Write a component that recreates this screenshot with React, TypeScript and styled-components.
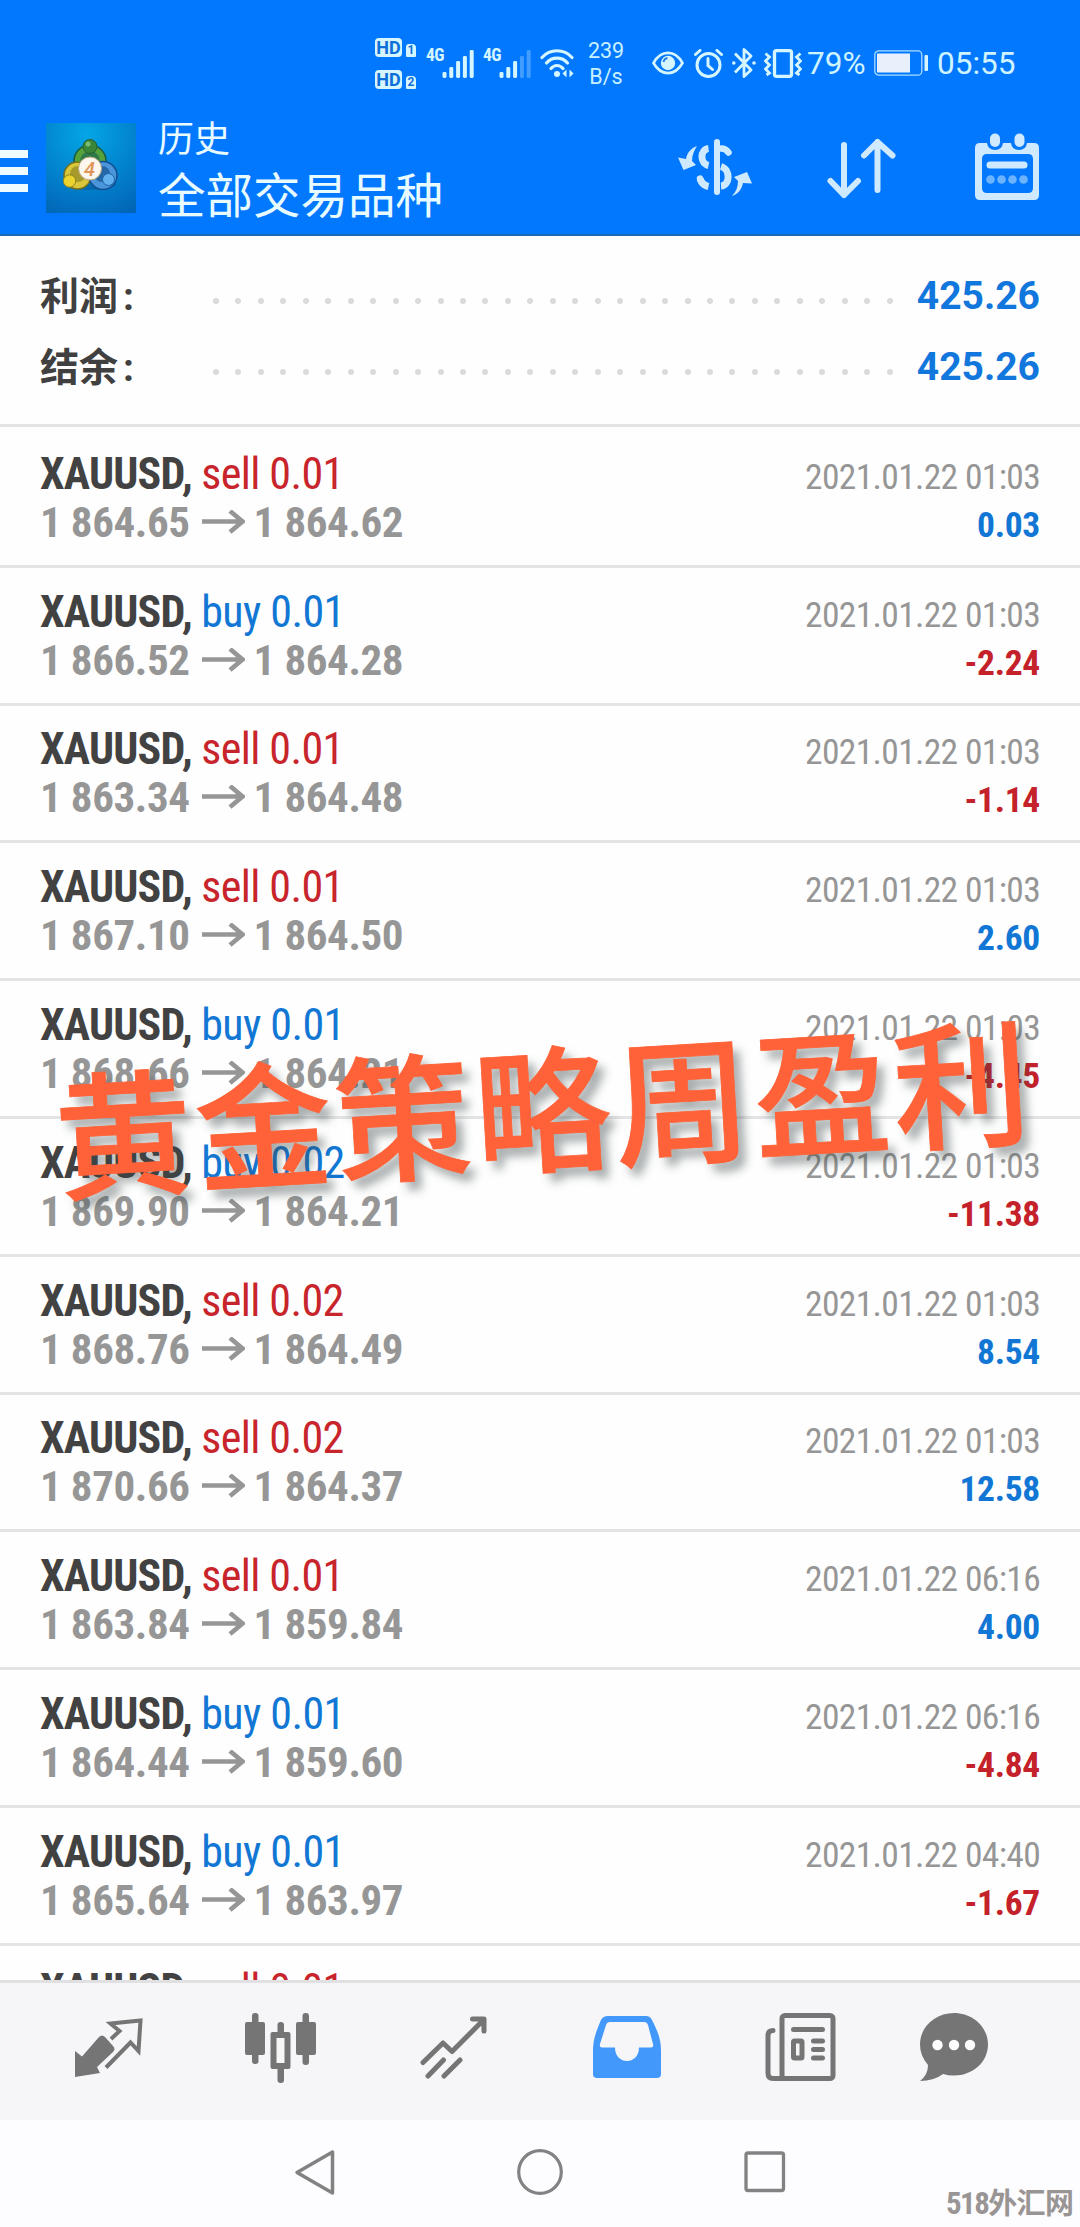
import React from "react";
import styled, { createGlobalStyle } from "styled-components";

const Global = createGlobalStyle`
  * { box-sizing: border-box; }
  html, body { margin: 0; background: #fdfdff; }
  svg { display: block; flex: none; }
`;

const UI = `"Roboto", "Noto Sans CJK SC", sans-serif`;
const COND = `"Roboto Condensed", "Roboto", "Noto Sans CJK SC", sans-serif`;

const Screen = styled.div`
  position: relative;
  width: 1080px;
  height: 2227px;
  display: flex;
  flex-direction: column;
  overflow: hidden;
  background: #fefefe;
  font-family: ${UI};
`;

const Header = styled.header`
  height: 236px;
  flex: none;
  display: flex;
  flex-direction: column;
  background: #0278ff;
  border-bottom: 2px solid #1a68b8;
  color: #e8fbff;
`;

const StatusBar = styled.div`
  height: 118px;
  padding: 8px 0 0 375px;
  display: flex;
  align-items: center;
`;

const Slot = styled.div<{ $gap?: number; $drop?: number }>`
  flex: none;
  margin-left: ${(p) => p.$gap ?? 0}px;
  padding-top: ${(p) => p.$drop ?? 0}px;
`;

const HdStack = styled.div`
  display: flex;
  flex-direction: column;
  gap: 13px;
`;
const HdLine = styled.div`
  display: flex;
  align-items: flex-end;
  gap: 4px;
`;
const HdTag = styled.span`
  width: 27px;
  height: 19px;
  border-radius: 4px;
  background: #d5f6ff;
  color: #0e6fd8;
  font: 700 18px/19px ${UI};
  text-align: center;
`;
const HdNum = styled.span`
  width: 10px;
  height: 13px;
  border-radius: 3px 4px 1px 1px;
  background: #d5f6ff;
  color: #0e6fd8;
  font: 700 12px/13px ${UI};
  text-align: center;
`;
const NetLabel = styled.span`
  display: block;
  width: 17px;
  margin-top: -16px;
  font: 700 17.5px/17px ${COND};
  font-stretch: 75%;
  letter-spacing: -0.6px;
  color: #d5f6ff;
`;
const Speed = styled.div`
  width: 40px;
  font-size: 21.5px;
  line-height: 26px;
  text-align: center;
  color: #c8f1ff;
`;
const StatusText = styled.span<{ $w: number }>`
  display: block;
  width: ${(p) => p.$w}px;
  font-size: 31.5px;
  line-height: 36px;
  white-space: nowrap;
  color: #d0f4ff;
`;

const AppBar = styled.div`
  flex: 1;
  display: flex;
  align-items: flex-start;
`;
const MenuIcon = styled.div`
  width: 28px;
  margin-top: 32px;
  display: flex;
  flex-direction: column;
  gap: 9.5px;
  i { height: 7.5px; background: #effcff; }
`;
const Logo = styled.div`
  width: 90px;
  height: 90px;
  margin: 5px 0 0 18px;
  background: radial-gradient(circle at 45% 12%, #04a6e6 0, #0287d0 45%, #0262b4 100%);
`;
const Titles = styled.div`
  margin-left: 22px;
  padding-top: 2px;
  width: 500px;
`;
const Small = styled.div`
  font-size: 36px;
  line-height: 40px;
`;
const Big = styled.div`
  margin-top: 11px;
  font-size: 47.5px;
  line-height: 52px;
`;
const Actions = styled.div`
  display: flex;
  margin-left: 19px;
  padding-top: 14px;
`;

const Summary = styled.section`
  height: 191px;
  flex: none;
  padding: 26px 40px 0 40px;
  border-bottom: 3px solid #e4e4e6;
`;
const SummaryRow = styled.div`
  height: 70.4px;
  display: flex;
  align-items: center;
`;
const SumLabel = styled.span`
  width: 173px;
  font-size: 39px;
  line-height: 60px;
  font-weight: 700;
  color: #404040;
`;
const Colon = styled.span`
  margin-left: 5px;
`;
const Dots = styled.span`
  width: 680px;
  padding-top: 8px;
  display: flex;
  justify-content: space-between;
  i { width: 6px; height: 6px; border-radius: 50%; background: #dcdad9; }
`;
const SumValue = styled.span`
  flex: 1;
  text-align: right;
  padding-bottom: 2px;
  font-size: 39px;
  font-weight: 700;
  color: #1277dc;
`;

const List = styled.section`
  height: 1553px;
  flex: none;
  overflow: hidden;
`;
const Deal = styled.article<{ $first?: boolean }>`
  height: ${(p) => (p.$first ? 140.8 : 137.8)}px;
  padding: ${(p) => (p.$first ? 22.5 : 19.9)}px 40px 0;
  border-bottom: 3px solid #e4e4e6;
`;
const Line = styled.div`
  display: flex;
  align-items: baseline;
  justify-content: space-between;
  height: 48px;
  line-height: 48px;
  white-space: nowrap;
  font-family: ${COND};
  font-stretch: 75%;
`;
const Head = styled.span`
  font-size: 44px;
  font-weight: 700;
  letter-spacing: -0.8px;
  color: #424242;
`;
const Side = styled.span<{ $sell: boolean }>`
  font-weight: 400;
  letter-spacing: -0.6px;
  color: ${(p) => (p.$sell ? "#c8242b" : "#1277d4")};
`;
const Prices = styled.span`
  display: flex;
  align-items: baseline;
  font-size: 43px;
  font-weight: 700;
  letter-spacing: -0.4px;
  color: #969696;
  svg { margin: 0 9px 0 12px; }
`;
const DateText = styled.span`
  font-size: 35.5px;
  letter-spacing: -0.66px;
  color: #969696;
`;
const Result = styled.span<{ $loss: boolean }>`
  font-size: 35.5px;
  font-weight: 700;
  letter-spacing: -0.3px;
  color: ${(p) => (p.$loss ? "#c4212a" : "#1277d4")};
`;

const TabBar = styled.nav`
  height: 140px;
  flex: none;
  display: flex;
  align-items: flex-start;
  padding: 30px 0 0 75px;
  border-top: 3px solid #e0e0e2;
  background: #f6f6f8;
`;
const SysBar = styled.footer`
  flex: 1;
  display: flex;
  align-items: flex-start;
  padding: 28px 0 0 294px;
  background: #fdfdff;
`;

const Banner = styled.div`
  position: absolute;
  left: 54px;
  top: 1002px;
  width: 979px;
  line-height: 200px;
  font-family: "Noto Sans CJK SC", sans-serif;
  font-weight: 500;
  font-size: 137px;
  letter-spacing: 2.8px;
  white-space: nowrap;
  color: #ff6238;
  -webkit-text-stroke: 0.8px #ff6238;
  transform: rotate(-3.35deg);
  text-shadow: 7px 9px 10px rgba(60, 70, 70, 0.45);
`;
const Watermark = styled.div`
  position: absolute;
  left: 946px;
  top: 2184px;
  line-height: 40px;
  font-family: ${COND};
  font-stretch: 75%;
  font-weight: 700;
  font-size: 31px;
  letter-spacing: -1.6px;
  white-space: nowrap;
  color: #9a9595;
`;
const WatermarkName = styled.span`
  font-size: 29px;
  letter-spacing: -0.6px;
`;

const deals: [string, string, string, string, string, string][] = [
  ["sell", "0.01", "1 864.65", "1 864.62", "2021.01.22 01:03", "0.03"],
  ["buy", "0.01", "1 866.52", "1 864.28", "2021.01.22 01:03", "-2.24"],
  ["sell", "0.01", "1 863.34", "1 864.48", "2021.01.22 01:03", "-1.14"],
  ["sell", "0.01", "1 867.10", "1 864.50", "2021.01.22 01:03", "2.60"],
  ["buy", "0.01", "1 868.66", "1 864.21", "2021.01.22 01:03", "-4.45"],
  ["buy", "0.02", "1 869.90", "1 864.21", "2021.01.22 01:03", "-11.38"],
  ["sell", "0.02", "1 868.76", "1 864.49", "2021.01.22 01:03", "8.54"],
  ["sell", "0.02", "1 870.66", "1 864.37", "2021.01.22 01:03", "12.58"],
  ["sell", "0.01", "1 863.84", "1 859.84", "2021.01.22 06:16", "4.00"],
  ["buy", "0.01", "1 864.44", "1 859.60", "2021.01.22 06:16", "-4.84"],
  ["buy", "0.01", "1 865.64", "1 863.97", "2021.01.22 04:40", "-1.67"],
  ["sell", "0.01", "1 865.64", "1 863.97", "2021.01.22 06:16", "1.67"],
];

const ICE = "#d5f6ff";

function Signal({ strong }: { strong: number }) {
  return (
    <svg width="32" height="29" viewBox="0 0 32 29">
      {[6, 11, 17, 22, 28].map((h, i) => (
        <rect key={h} x={0.5 + i * 6.8} y={29 - h} width="4" height={h} rx="1.4" fill={ICE} opacity={i < strong ? 1 : 0.3} />
      ))}
    </svg>
  );
}

function Status() {
  return (
    <StatusBar>
      <HdStack>
        <HdLine><HdTag>HD</HdTag><HdNum>1</HdNum></HdLine>
        <HdLine><HdTag>HD</HdTag><HdNum>2</HdNum></HdLine>
      </HdStack>
      <Slot $gap={10}><NetLabel>4G</NetLabel></Slot>
      <Slot $gap={-1}><Signal strong={5} /></Slot>
      <Slot $gap={9}><NetLabel>4G</NetLabel></Slot>
      <Slot $gap={-1}><Signal strong={3} /></Slot>
      <Slot $gap={9}>
        <svg width="34" height="30" viewBox="0 0 34 30" fill="none" stroke={ICE} strokeWidth="3.2" strokeLinecap="round">
          <path d="M2 9.5C10 .5 24 .5 32 9.5M6.500 15C12 8.500 22 8.500 27.500 15M11 20.500c3.500-4 8.500-4 12 0" />
          <circle cx="17" cy="26" r="3" fill={ICE} stroke="none" />
          <path d="M26.500 21.500v8l-4-4zM29.500 21.500v8l4-4z" fill={ICE} stroke="none" />
        </svg>
      </Slot>
      <Slot $gap={12} $drop={2}><Speed>239<br />B/s</Speed></Slot>
      <Slot $gap={26}>
        <svg width="32" height="24" viewBox="0 0 32 24">
          <path d="M1.500 12C9-1.500 23-1.500 30.500 12C23 25.500 9 25.500 1.500 12z" fill="none" stroke={ICE} strokeWidth="2.600" />
          <circle cx="16" cy="12" r="7.200" fill={ICE} />
          <path d="M11.500 11a5 5 0 0 1 4-4" stroke="#2a84dd" strokeWidth="1.800" fill="none" />
        </svg>
      </Slot>
      <Slot $gap={10}>
        <svg width="29" height="29" viewBox="0 0 29 29" fill="none" stroke={ICE} strokeWidth="3" strokeLinecap="round">
          <circle cx="14.500" cy="16" r="11.500" />
          <path d="M14 9.500v7l4.500 4M1.500 5.500l4.500-4M27.500 5.500l-4.500-4" />
        </svg>
      </Slot>
      <Slot $gap={9}>
        <svg width="24" height="30" viewBox="0 0 24 30" fill="none" stroke={ICE} strokeWidth="2.800" strokeLinejoin="round">
          <path d="M3 5.500l16 16.500-7 6.500v-27l7 6.500L3 24.500" />
          <circle cx="1.800" cy="15" r="1.800" fill={ICE} stroke="none" />
          <circle cx="22" cy="15" r="1.800" fill={ICE} stroke="none" />
        </svg>
      </Slot>
      <Slot $gap={8}>
        <svg width="38" height="29" viewBox="0 0 38 29" fill="none" stroke={ICE} strokeWidth="3.300">
          <rect x="10.500" y="1.700" width="17" height="25.600" rx="2" />
          <path d="M1.500 4.500l4 3.500-4 4 4 4-4 4 4 4-3 2M36.500 4.500l-4 3.500 4 4-4 4 4 4-4 4 3 2" strokeWidth="2.800" />
        </svg>
      </Slot>
      <Slot $gap={5} $drop={1}><StatusText $w={60}>79%</StatusText></Slot>
      <Slot $gap={7}>
        <svg width="54" height="26" viewBox="0 0 54 26">
          <rect x=".8" y=".8" width="47" height="24.400" rx="4" fill="none" stroke={ICE} strokeWidth="1.300" opacity=".8" />
          <rect x="3" y="3.500" width="33" height="19" fill="#e8f1fb" />
          <rect x="50.500" y="5" width="3.500" height="16" rx="1" fill={ICE} />
        </svg>
      </Slot>
      <Slot $gap={9} $drop={1}><StatusText $w={80}>05:55</StatusText></Slot>
    </StatusBar>
  );
}

function LogoArt() {
  return (
    <svg width="90" height="90" viewBox="0 0 90 90">
      <ellipse cx="44" cy="61" rx="26" ry="6" fill="#064a86" opacity=".4" />
      <circle cx="44" cy="38" r="16" fill="#56a33c" stroke="#1c5a3c" strokeWidth="1.500" />
      <circle cx="44" cy="38" r="10" fill="#2f7a4a" />
      <circle cx="31.500" cy="52.500" r="13.500" fill="#d9c63a" stroke="#75701f" strokeWidth="1.500" />
      <circle cx="32" cy="51" r="8" fill="#a79a2c" />
      <circle cx="57" cy="52.500" r="14" fill="#4a95dc" stroke="#134f91" strokeWidth="1.500" />
      <circle cx="56" cy="51" r="8" fill="#2667a8" />
      <circle cx="44" cy="23.500" r="7" fill="#3b8538" stroke="#236034" strokeWidth="1" />
      <circle cx="42" cy="21" r="2.500" fill="#7cbc70" />
      <circle cx="23.500" cy="58" r="6.200" fill="#ecd32f" stroke="#8f8520" strokeWidth="1" />
      <circle cx="62.500" cy="56.500" r="6" fill="#62b0ee" stroke="#1b60a6" strokeWidth="1" />
      <circle cx="44" cy="45.500" r="11.500" fill="#fdf6ee" stroke="#b5a778" strokeWidth="1" />
      <text x="43.500" y="52.500" textAnchor="middle" fontFamily="Roboto" fontStyle="italic" fontWeight="500" fontSize="20" fill="#e09458">4</text>
    </svg>
  );
}

const BAR = "#cfeaff";
const GREY = "#757575";

export default function App() {
  return (
    <Screen>
      <Global />
      <Header>
        <Status />
        <AppBar>
          <MenuIcon><i /><i /><i /></MenuIcon>
          <Logo><LogoArt /></Logo>
          <Titles>
            <Small>历史</Small>
            <Big>全部交易品种</Big>
          </Titles>
          <Actions>
            <Slot>
              <svg width="76" height="70" viewBox="0 0 76 70" fill="none" stroke={BAR} strokeWidth="6" strokeLinecap="round">
                <path d="M40 10v50" />
                <path d="M31.500 16.500c-8.500 1-9 15 0 17M44 34.500c10 3 9 19 0 19.500M23 47c1.500 4 4 6.500 8.500 7.500" strokeWidth="7" strokeLinecap="butt" />
                <path d="M44 16.500c4 0 6 1.500 7.500 4M23 46.500c1 3 2 4.500 4 6" strokeWidth="6.500" />
                <path d="M20 14c-6 2-10 7-11 13L1 25.500 6.500 38l12.500-5-4-4c0-6 2-10 5-15z M55 64c7-2 10-8 11-13l9 .5-5-11.500-13 5 4 4c0 6-2 11-6 15z" fill={BAR} stroke="none" />
              </svg>
            </Slot>
            <Slot $gap={74}>
              <svg width="70" height="70" viewBox="0 0 70 70" fill="none" stroke={BAR} strokeWidth="6" strokeLinecap="round" strokeLinejoin="round">
                <path d="M17 13v50M3.500 49l13.500 14 14-14M50.500 58V10M37 23.500L50.500 10l15 13.500" />
              </svg>
            </Slot>
            <Slot $gap={78}>
              <svg width="66" height="70" viewBox="0 0 66 70">
                <path fillRule="evenodd" fill={BAR} d="M5 11h7q1 7 8 7t8-7h8q1 7 8 7t8-7h7q5 0 5 5v47q0 5-5 5H5q-5 0-5-5V16q0-5 5-5zM12 22q-5 0-5 5v29q0 5 5 5h41q5 0 5-5V27q0-5-5-5z" />
                <rect x="15" y="1.500" width="10" height="13.500" rx="5" fill={BAR} />
                <rect x="39.500" y="1.500" width="10" height="13.500" rx="5" fill={BAR} />
                <path d="M15 33h34" stroke={BAR} strokeWidth="7" strokeLinecap="round" />
                {[15.500, 26.500, 37.500, 48.500].map((x) => <circle key={x} cx={x} cy="47.500" r="4.300" fill="#6cb4ff" />)}
              </svg>
            </Slot>
          </Actions>
        </AppBar>
      </Header>

      <Summary>
        {["利润", "结余"].map((label) => (
          <SummaryRow key={label}>
            <SumLabel>{label}<Colon>:</Colon></SumLabel>
            <Dots>{Array.from({ length: 31 }, (_, i) => <i key={i} />)}</Dots>
            <SumValue>425.26</SumValue>
          </SummaryRow>
        ))}
      </Summary>

      <List>
        {deals.map(([side, lot, open, close, date, result], i) => (
          <Deal key={i} $first={i === 0}>
            <Line>
              <Head>XAUUSD, <Side $sell={side === "sell"}>{side} {lot}</Side></Head>
              <DateText>{date}</DateText>
            </Line>
            <Line>
              <Prices>
                {open}
                <svg width="43" height="27" viewBox="0 0 43 27" fill="none" stroke="#969696" strokeWidth="4.600">
                  <path d="M0 11.500h40M28 1l12.500 10.500L28 22" />
                </svg>
                {close}
              </Prices>
              <Result $loss={result.startsWith("-")}>{result}</Result>
            </Line>
          </Deal>
        ))}
      </List>

      <TabBar>
        <Slot>
          <svg width="68" height="70" viewBox="0 0 68 70">
            <path d="M0 38l7 5.500L24 24q3-3 6 0l8 9q3 3 0 6L22 54l3 6-25 4z" fill={GREY} />
            <path d="M36 26l8.500-8-9-7.500L65.500 7.500 63.500 38l-8-8.500L31 54.500" fill="none" stroke={GREY} strokeWidth="4" />
          </svg>
        </Slot>
        <Slot $gap={102}>
          <svg width="71" height="70" viewBox="0 0 71 70" fill={GREY}>
            <rect x="0" y="9" width="20" height="33" rx="2" /><rect x="7" y="0" width="6.500" height="51" rx="3" />
            <rect x="51" y="9" width="20" height="33" rx="2" /><rect x="57.500" y="0" width="6.500" height="52" rx="3" />
            <rect x="32.500" y="9" width="6.500" height="14" rx="3" /><rect x="32.500" y="50" width="6.500" height="20" rx="3" />
            <path fillRule="evenodd" d="M27.500 19h16q2 0 2 2v33q0 2-2 2h-16q-2 0-2-2V21q0-2 2-2zM31.500 25v25h8V25z" />
          </svg>
        </Slot>
        <Slot $gap={104}>
          <svg width="68" height="70" viewBox="0 0 68 70" fill="none" stroke={GREY} strokeWidth="5" strokeLinecap="round" strokeLinejoin="round">
            <path d="M3 49.500L23 30l9 8.500L63.500 7M52.500 6H64v12M8 63l15.500-16M24 63l16-16" />
          </svg>
        </Slot>
        <Slot $gap={105}>
          <svg width="68" height="70" viewBox="0 0 68 70">
            <path fillRule="evenodd" fill="#4298fb" d="M15 3h38q4 0 6 4c6 12 9 19 9 31v23q0 4-4 4H4q-4 0-4-4V38C0 26 3 19 8 7q2-4 7-4zM17 9q-3 0-4 3L7 31q-1 3.500 2 3.500h13c0 18 24 18 24 0H58q3 0 2-3.500L55 12q-1-3-4-3z" />
          </svg>
        </Slot>
        <Slot $gap={104}>
          <svg width="71" height="70" viewBox="0 0 71 70" fill="none" stroke={GREY} strokeWidth="5" strokeLinecap="round">
            <rect x="17" y="2.500" width="51" height="63" rx="3" />
            <path d="M8 17.500q-5 0-5 5V60q0 5.500 5 5.500h11" />
            <path d="M28.500 16.500h29M48.500 28h9M48.500 36.500h9M48.500 45h9" />
            <rect x="28.500" y="28" width="8.500" height="17" rx="1" />
          </svg>
        </Slot>
        <Slot $gap={84}>
          <svg width="68" height="70" viewBox="0 0 68 70">
            <path fill={GREY} d="M34 0C53 0 68 14 68 31.500S53 62.500 34 62.500q-6 0-11-1.500Q14 68 0 68q8-6 8-16Q0 43 0 31.500C0 14 15 0 34 0z" />
            <g fill="#fff"><circle cx="17.500" cy="32" r="5.200" /><circle cx="34" cy="32" r="5.200" /><circle cx="50" cy="32" r="5.200" /></g>
          </svg>
        </Slot>
      </TabBar>

      <SysBar>
        <svg width="44" height="48" viewBox="0 0 44 48" fill="none" stroke="#828282" strokeWidth="3.500" strokeLinejoin="round">
          <path d="M3 24.500L38.500 4v41z" />
        </svg>
        <Slot $gap={179}>
          <svg width="48" height="48" viewBox="0 0 48 48" fill="none" stroke="#828282" strokeWidth="3.200"><circle cx="23" cy="24" r="21.300" /></svg>
        </Slot>
        <Slot $gap={179}>
          <svg width="44" height="48" viewBox="0 0 44 48" fill="none" stroke="#828282" strokeWidth="3.300"><rect x="2" y="5" width="37.500" height="37.500" rx="2" /></svg>
        </Slot>
      </SysBar>

      <Banner>黄金策略周盈利</Banner>
      <Watermark>518<WatermarkName>外汇网</WatermarkName></Watermark>
    </Screen>
  );
}
